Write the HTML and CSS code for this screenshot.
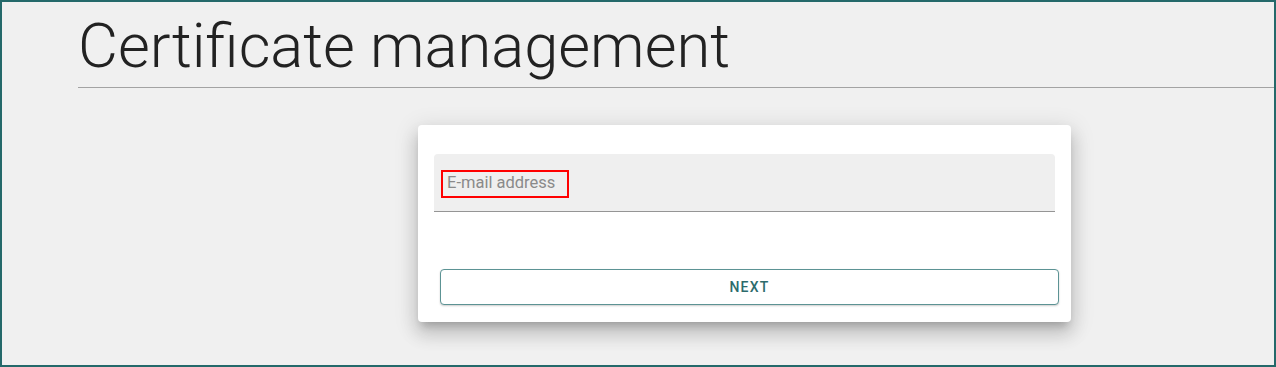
FILE: index.html
```html
<!DOCTYPE html>
<html lang="en">
<head>
    <meta charset="UTF-8">
    <meta name="viewport" content="width=device-width, initial-scale=1.0">
    <title>Certificate management</title>
    <link rel="stylesheet" href="styles.css">
</head>
<body>
    <div class="frame">
        <div class="page">
            <h1 class="title">Certificate management</h1>

            <div class="card">
                <div class="field">
                    <span class="field-label">E-mail address</span>
                    <span class="highlight"></span>
                </div>
                <button class="btn-next">NEXT</button>
            </div>
        </div>
    </div>
</body>
</html>
```
FILE: styles.css
```css
* {
    box-sizing: border-box;
}
body {
    margin: 0;
    font-family: Roboto, "Liberation Sans", Arial, sans-serif;
    background: #f0f0f0;
}
.frame {
    height: 367px;
    border: 2px solid #24696a;
    background: #f0f0f0;
    overflow: hidden;
}
.page {
    padding-left: 76px;
}
.title {
    margin: 13px 0 0 0;
    padding-bottom: 9px;
    font-size: 61.5px;
    line-height: 63px;
    font-weight: 300;
    color: #222;
    border-bottom: 1px solid #a3a3a3;
}
.card {
    width: 653px;
    margin: 37px 0 0 340px;
    padding: 29px 12px 17px 16px;
    background: #fff;
    border-radius: 4px;
    box-shadow: 0 7px 8px -4px rgba(0,0,0,0.2),
                0 12px 17px 2px rgba(0,0,0,0.12),
                0 5px 22px 4px rgba(0,0,0,0.1);
}
.field {
    position: relative;
    width: 621px;
    height: 58px;
    background: #efefef;
    border-radius: 4px 4px 0 0;
    border-bottom: 1px solid #959595;
    padding: 19px 0 0 13px;
}
.field-label {
    font-size: 16.5px;
    line-height: 19px;
    color: #8a8a8a;
}
/* annotation box around the label */
.highlight {
    position: absolute;
    left: 7px;
    top: 16px;
    width: 128px;
    height: 28px;
    border: 2px solid #f00;
}
.btn-next {
    display: block;
    width: 619px;
    height: 36px;
    margin: 57px 0 0 6px;
    background: #fff;
    border: 1px solid #5c9394;
    border-radius: 4px;
    box-shadow: 0 1px 2px rgba(0,0,0,0.2);
    color: #2d6b6c;
    font-family: Roboto, "Liberation Sans", Arial, sans-serif;
    font-size: 14px;
    font-weight: 500;
    letter-spacing: 1.25px;
    cursor: pointer;
}
```
